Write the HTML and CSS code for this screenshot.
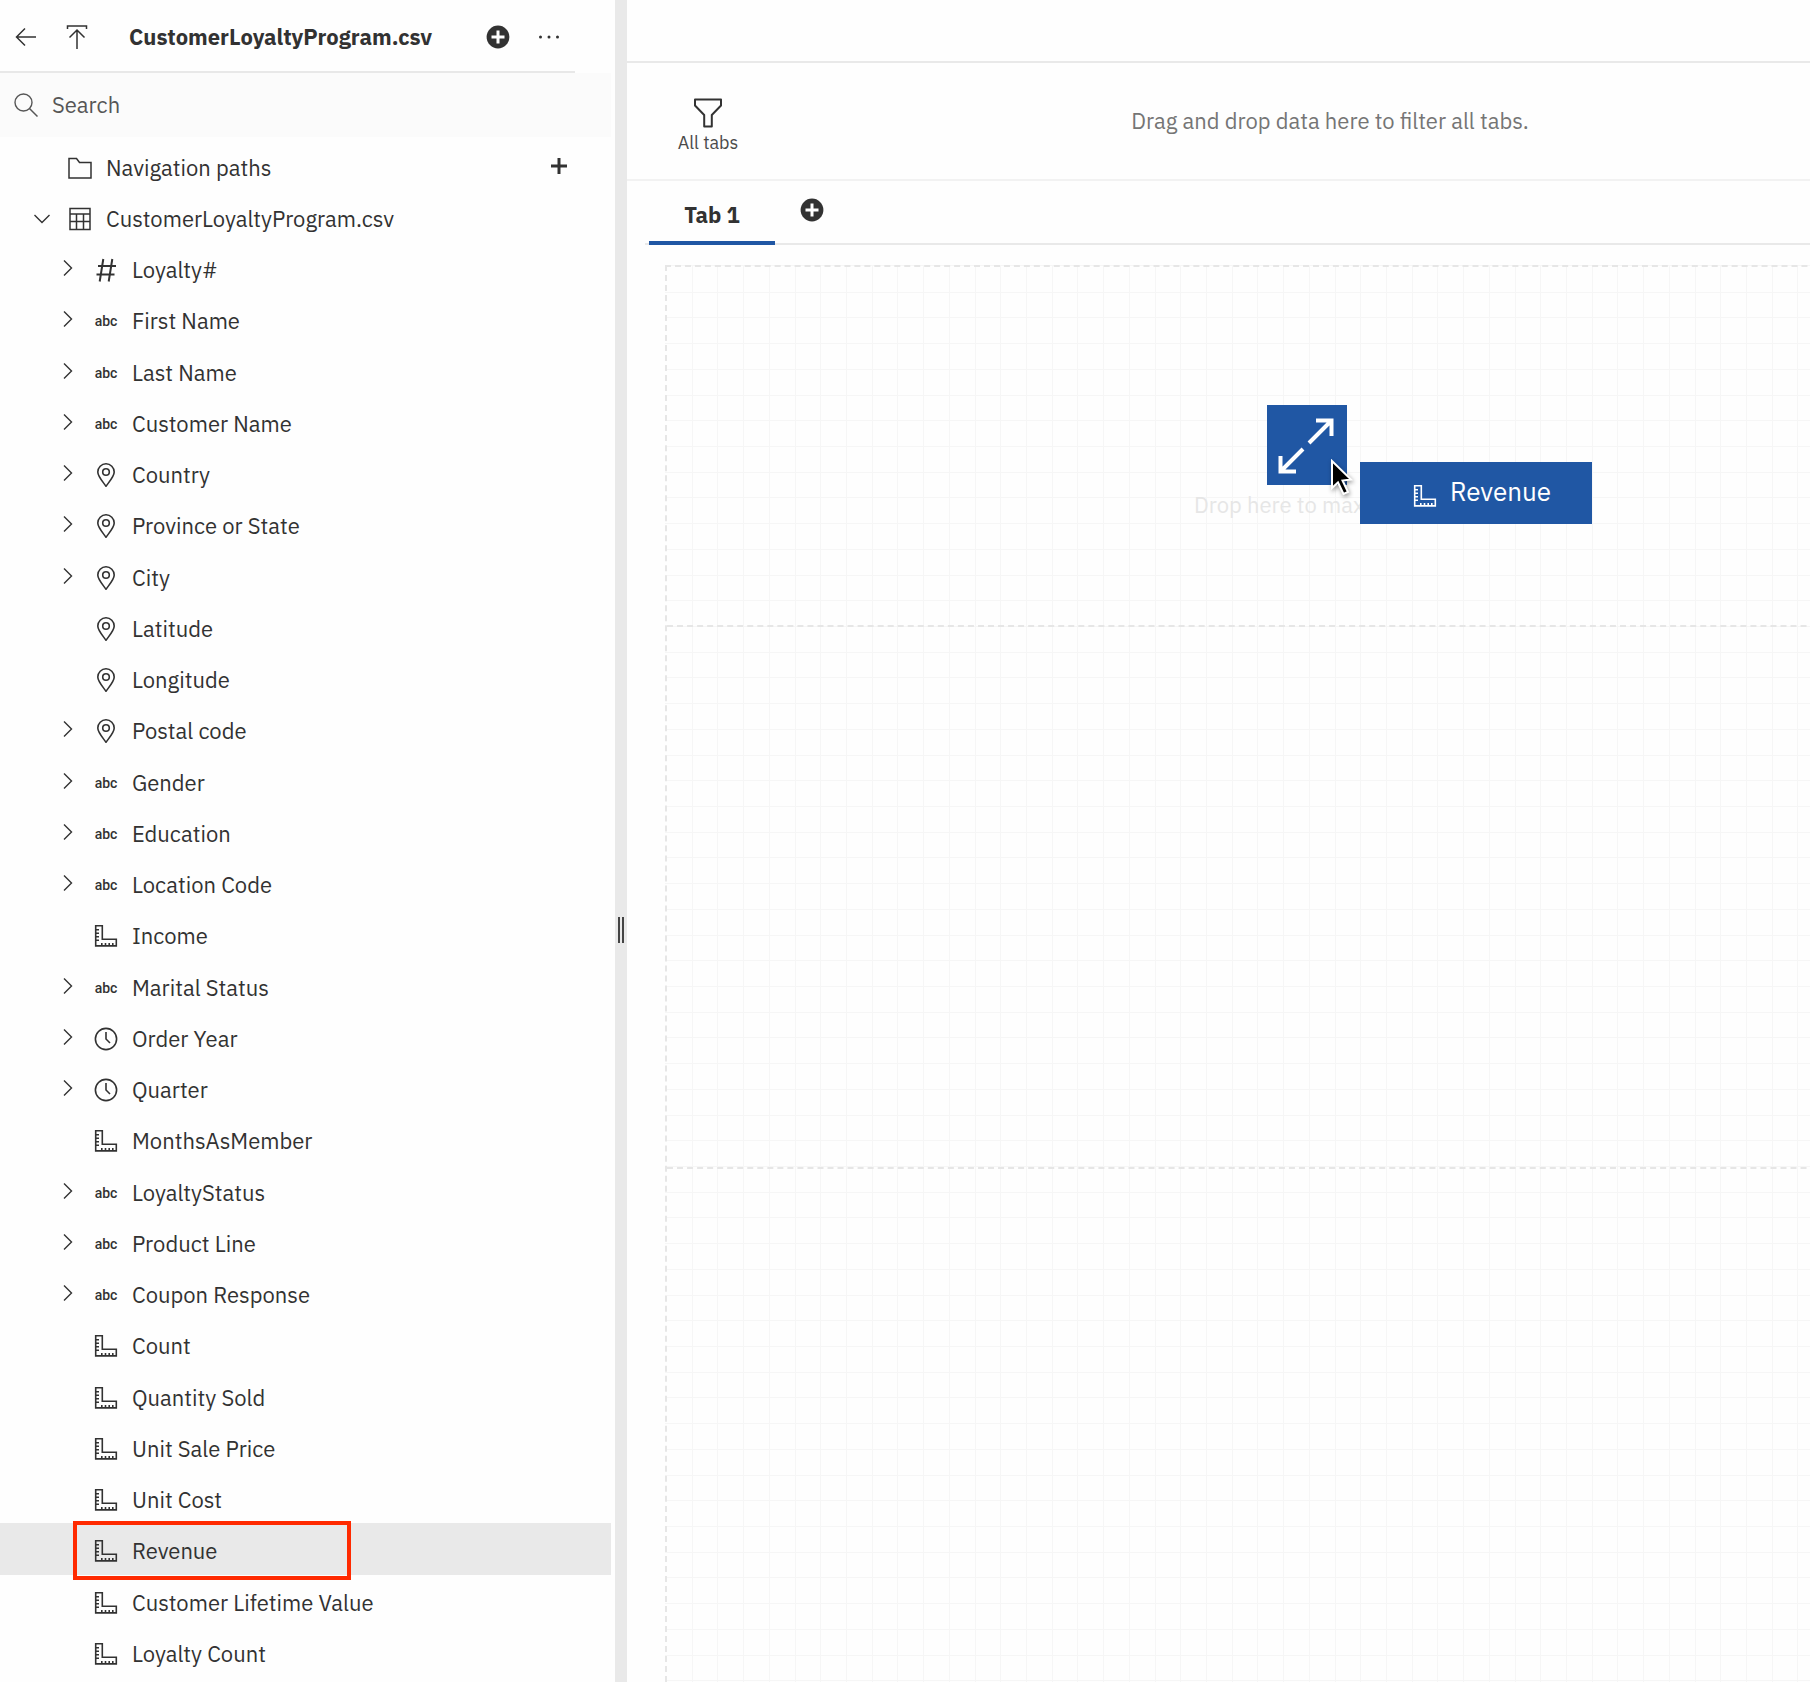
FILE: index.html
```html
<!DOCTYPE html>
<html lang="en">
<head>
<meta charset="utf-8">
<title>CustomerLoyaltyProgram.csv</title>
<link rel="stylesheet" href="styles.css">
</head>
<body>
<svg class="defs" aria-hidden="true">
  <symbol id="chevron" viewBox="0 0 10 18"><path d="M1 1.500l7.500 7.500-7.500 7.500" fill="none" stroke="currentColor" stroke-width="1.400"/></symbol>
  <symbol id="hash" viewBox="0 0 24 24"><path d="M9.300 1L5.700 23.500M18.300 1l-3.600 22.500M4 8h18M2.500 16.500h18" fill="none" stroke="currentColor" stroke-width="2"/></symbol>
  <symbol id="pin" viewBox="0 0 24 24"><path d="M12 23.200C9 19 3.800 13.500 3.800 9a8.200 8.200 0 0 1 16.400 0c0 4.500-5.200 10-8.200 14.200z" fill="none" stroke="currentColor" stroke-width="1.600"/><circle cx="12" cy="9" r="3.300" fill="none" stroke="currentColor" stroke-width="1.600"/></symbol>
  <symbol id="clock" viewBox="0 0 24 24"><circle cx="12" cy="12" r="10.600" fill="none" stroke="currentColor" stroke-width="1.600"/><path d="M12 5v7l4 4" fill="none" stroke="currentColor" stroke-width="1.600"/></symbol>
  <symbol id="ruler" viewBox="0 0 24 24"><path d="M1.700 1.700h6.600v13.600h14v6.600H1.700zM2 5.800h3M2 9.300h3M2 12.800h3M2 16.300h3M7.800 22v-3M11.500 22v-3M15.200 22v-3M18.800 22v-3" fill="none" stroke="currentColor" stroke-width="1.600"/></symbol>
  <symbol id="plus-circle" viewBox="0 0 24 24"><circle cx="12" cy="12" r="11.400" fill="currentColor"/><path d="M12 5.500v13M5.500 12h13" stroke="#fff" stroke-width="3"/></symbol>
</svg>
<div class="app">
  <aside class="sources">
    <header class="source-header">
      <button class="icon-button" aria-label="Back"><svg width="24" height="24" viewBox="0 0 24 24"><path d="M22 12H2.500M11 3.500L2.500 12l8.500 8.500" fill="none" stroke="currentColor" stroke-width="1.500"/></svg></button>
      <button class="icon-button" aria-label="Move to top"><svg width="24" height="24" viewBox="0 0 24 24"><path d="M2.500 4V1h19v3M12 24V5M4.500 12.500L12 5l7.500 7.500" fill="none" stroke="currentColor" stroke-width="1.500"/></svg></button>
      <h1 class="source-title">CustomerLoyaltyProgram.csv</h1>
      <button class="icon-button" aria-label="Add source"><svg width="24" height="24"><use href="#plus-circle"/></svg></button>
      <button class="icon-button" aria-label="More"><svg width="24" height="24" viewBox="0 0 24 24" fill="currentColor"><circle cx="3.500" cy="12" r="1.500"/><circle cx="12" cy="12" r="1.500"/><circle cx="20.500" cy="12" r="1.500"/></svg></button>
    </header>
    <label class="search">
      <svg width="24" height="24" viewBox="0 0 24 24"><circle cx="9.500" cy="9.500" r="8.500" fill="none" stroke="currentColor" stroke-width="1.400"/><path d="M15.500 15.500l8 8" stroke="currentColor" stroke-width="1.500"/></svg>
      <input type="search" placeholder="Search" aria-label="Search">
    </label>
    <div class="row group">
      <span class="chevron"></span>
      <svg class="type" viewBox="0 0 24 24"><path d="M1 2.500h7.500l3 4H23v15.500H1z" fill="none" stroke="currentColor" stroke-width="1.500"/></svg>
      <span class="name">Navigation paths</span>
      <button class="icon-button add-path" aria-label="Add navigation path"><svg width="16" height="16" viewBox="0 0 16 16"><path d="M8 0v16M0 8h16" stroke="currentColor" stroke-width="3"/></svg></button>
    </div>
    <div class="row group">
      <svg class="chevron open" viewBox="0 0 18 10"><path d="M1.500 1l7.500 7.500L16.500 1" fill="none" stroke="currentColor" stroke-width="1.400"/></svg>
      <svg class="type" viewBox="0 0 24 24"><path d="M2 1.500h20v21H2zM2 7h20M2 14.500h20M8.500 7v15.500M15.500 7v15.500" fill="none" stroke="currentColor" stroke-width="1.500"/></svg>
      <span class="name">CustomerLoyaltyProgram.csv</span>
    </div>
    <ul class="fields">
      <li class="row"><svg class="chevron"><use href="#chevron"/></svg><svg class="type"><use href="#hash"/></svg><span class="name">Loyalty#</span></li>
      <li class="row"><svg class="chevron"><use href="#chevron"/></svg><span class="type abc">abc</span><span class="name">First Name</span></li>
      <li class="row"><svg class="chevron"><use href="#chevron"/></svg><span class="type abc">abc</span><span class="name">Last Name</span></li>
      <li class="row"><svg class="chevron"><use href="#chevron"/></svg><span class="type abc">abc</span><span class="name">Customer Name</span></li>
      <li class="row"><svg class="chevron"><use href="#chevron"/></svg><svg class="type"><use href="#pin"/></svg><span class="name">Country</span></li>
      <li class="row"><svg class="chevron"><use href="#chevron"/></svg><svg class="type"><use href="#pin"/></svg><span class="name">Province or State</span></li>
      <li class="row"><svg class="chevron"><use href="#chevron"/></svg><svg class="type"><use href="#pin"/></svg><span class="name">City</span></li>
      <li class="row"><span class="chevron"></span><svg class="type"><use href="#pin"/></svg><span class="name">Latitude</span></li>
      <li class="row"><span class="chevron"></span><svg class="type"><use href="#pin"/></svg><span class="name">Longitude</span></li>
      <li class="row"><svg class="chevron"><use href="#chevron"/></svg><svg class="type"><use href="#pin"/></svg><span class="name">Postal code</span></li>
      <li class="row"><svg class="chevron"><use href="#chevron"/></svg><span class="type abc">abc</span><span class="name">Gender</span></li>
      <li class="row"><svg class="chevron"><use href="#chevron"/></svg><span class="type abc">abc</span><span class="name">Education</span></li>
      <li class="row"><svg class="chevron"><use href="#chevron"/></svg><span class="type abc">abc</span><span class="name">Location Code</span></li>
      <li class="row"><span class="chevron"></span><svg class="type"><use href="#ruler"/></svg><span class="name">Income</span></li>
      <li class="row"><svg class="chevron"><use href="#chevron"/></svg><span class="type abc">abc</span><span class="name">Marital Status</span></li>
      <li class="row"><svg class="chevron"><use href="#chevron"/></svg><svg class="type"><use href="#clock"/></svg><span class="name">Order Year</span></li>
      <li class="row"><svg class="chevron"><use href="#chevron"/></svg><svg class="type"><use href="#clock"/></svg><span class="name">Quarter</span></li>
      <li class="row"><span class="chevron"></span><svg class="type"><use href="#ruler"/></svg><span class="name">MonthsAsMember</span></li>
      <li class="row"><svg class="chevron"><use href="#chevron"/></svg><span class="type abc">abc</span><span class="name">LoyaltyStatus</span></li>
      <li class="row"><svg class="chevron"><use href="#chevron"/></svg><span class="type abc">abc</span><span class="name">Product Line</span></li>
      <li class="row"><svg class="chevron"><use href="#chevron"/></svg><span class="type abc">abc</span><span class="name">Coupon Response</span></li>
      <li class="row"><span class="chevron"></span><svg class="type"><use href="#ruler"/></svg><span class="name">Count</span></li>
      <li class="row"><span class="chevron"></span><svg class="type"><use href="#ruler"/></svg><span class="name">Quantity Sold</span></li>
      <li class="row"><span class="chevron"></span><svg class="type"><use href="#ruler"/></svg><span class="name">Unit Sale Price</span></li>
      <li class="row"><span class="chevron"></span><svg class="type"><use href="#ruler"/></svg><span class="name">Unit Cost</span></li>
      <li class="row selected"><span class="chevron"></span><svg class="type"><use href="#ruler"/></svg><span class="name">Revenue</span><span class="highlight"></span></li>
      <li class="row"><span class="chevron"></span><svg class="type"><use href="#ruler"/></svg><span class="name">Customer Lifetime Value</span></li>
      <li class="row"><span class="chevron"></span><svg class="type"><use href="#ruler"/></svg><span class="name">Loyalty Count</span></li>
    </ul>
  </aside>
  <div class="splitter" role="separator"><span class="grip"></span></div>
  <main class="dashboard">
    <div class="toolbar"></div>
    <section class="filter-bar">
      <div class="filter-scope">
        <svg width="32" height="32" viewBox="0 0 32 32"><path d="M3 2.500h26v6L19.800 18v11.500h-7.600V18L3 8.500z" fill="none" stroke="currentColor" stroke-width="2" stroke-linejoin="round"/></svg>
        <span>All tabs</span>
      </div>
      <p class="filter-hint">Drag and drop data here to filter all tabs.</p>
    </section>
    <nav class="tabs">
      <button class="tab">Tab 1</button>
      <button class="icon-button add-tab" aria-label="Add tab"><svg width="24" height="24"><use href="#plus-circle"/></svg></button>
    </nav>
    <div class="canvas">
      <section class="zone zone-top">
        <div class="maximize">
          <svg width="80" height="80" viewBox="0 0 80 80"><path d="M42 38L64 16M49 15.500h15.500V31M36 44L14 66M13.500 51v15.500H29" fill="none" stroke="#fff" stroke-width="4"/></svg>
          <span class="maximize-label">Drop here to maximize</span>
        </div>
      </section>
      <section class="zone zone-middle"></section>
      <section class="zone zone-bottom"></section>
      <div class="drag-chip"><svg width="24" height="24"><use href="#ruler"/></svg><span>Revenue</span></div>
      <svg class="cursor" width="24" height="40" viewBox="0 0 24 40"><path d="M2 2v27l6-5.500 5.500 11.500 4.500-2-5.500-11.500 8.500-1z" fill="#000" stroke="#fff" stroke-width="2"/></svg>
    </div>
  </main>
</div>
</body>
</html>
```
FILE: styles.css
```css
* {
  box-sizing: border-box;
}

body {
  margin: 0;
  background: #fefefe;
  color: #323232;
  font: 22px/28px "IBM Plex Sans", Roboto, sans-serif;
}

.defs {
  position: absolute;
  width: 0;
  height: 0;
}

button,
input {
  padding: 0;
  border: 0;
  background: none;
  color: inherit;
  font: inherit;
}

svg {
  flex: none;
}

.app {
  display: flex;
  min-height: 100vh;
  overflow: hidden;
}

.sources {
  flex: 0 0 34%;
  max-width: 615px;
  padding-right: 4px;
}

.source-header {
  display: flex;
  align-items: center;
  height: 73px;
  margin-right: 36px;
  padding: 2px 14px 0;
  gap: 27px;
  border-bottom: 2px solid #e8e8e8;
}

.icon-button {
  display: flex;
}

.source-title {
  flex: 1;
  margin: 0;
  padding-left: 13px;
  font-size: 22px;
  font-weight: 700;
}

.search {
  display: flex;
  align-items: center;
  height: 64px;
  margin-bottom: 3px;
  padding: 0 14px;
  gap: 14px;
  background: #fbfbfb;
  color: #565656;
}

.search input {
  flex: 1;
  outline: 0;
}

.search input::placeholder {
  color: #565656;
  opacity: 1;
}

.row {
  display: flex;
  align-items: center;
  height: 51px;
  padding-left: 63px;
}

.fields .row:nth-child(4n + 2) {
  height: 52px;
}

.group {
  padding: 5px 44px 0 33px;
}

.fields {
  margin: 0;
  padding: 0;
  list-style: none;
}

.chevron {
  flex: none;
  width: 10px;
  height: 18px;
  margin-right: 21px;
}

.group .chevron {
  width: 18px;
  margin-right: 17px;
}

.type {
  flex: none;
  width: 24px;
  height: 24px;
  margin-right: 14px;
}

.abc {
  font: 500 14px/24px Roboto, sans-serif;
  text-align: center;
}

.fields .type,
.fields .name {
  margin-top: 4px;
}

.name {
  flex: 1;
}

.add-path {
  margin-bottom: 4px;
}

.selected {
  position: relative;
  background: #e9e9e9;
}

.highlight {
  position: absolute;
  top: -2px;
  bottom: -5px;
  left: 73px;
  width: 278px;
  border: 4px solid #ff2a00;
}

.splitter {
  display: flex;
  flex: none;
  width: 12px;
  padding-top: 917px;
  justify-content: center;
  background: #e9e9e9;
}

.grip {
  width: 6px;
  height: 26px;
  border: solid #444;
  border-width: 0 2px;
}

.dashboard {
  display: flex;
  flex: 1;
  flex-direction: column;
  min-width: 0;
}

.toolbar {
  height: 63px;
  border-bottom: 2px solid #e9e9e9;
}

.filter-bar {
  display: flex;
  align-items: center;
  height: 118px;
  padding-left: 50px;
  border-bottom: 2px solid #f2f2f2;
}

.filter-scope {
  display: flex;
  flex-direction: column;
  align-items: center;
  width: 62px;
  margin-right: 111px;
  padding-top: 11px;
  font-size: 18px;
  color: #4a4a4a;
  white-space: nowrap;
}

.filter-scope svg {
  color: #323232;
}

.filter-hint {
  flex: 1;
  margin: 0;
  color: #757575;
  text-align: center;
}

.tabs {
  display: flex;
  height: 64px;
  margin-left: 18px;
  padding-left: 4px;
  border-bottom: 2px solid #e9e9e9;
}

.tab {
  width: 126px;
  height: 64px;
  padding-top: 8px;
  border-bottom: 4px solid #2057a4;
  font-weight: 700;
}

.add-tab {
  margin: 17px 25px;
}

.canvas {
  position: relative;
  display: flex;
  flex: 1;
  flex-direction: column;
  margin: 20px -137px 0 38px;
  border: 2px dashed #e6e6e6;
  border-width: 2px 0 0 2px;
  background:
    repeating-linear-gradient(90deg, transparent 0 calc(180px / 7 - 1px), #f6f6f6 calc(180px / 7 - 1px) calc(180px / 7)),
    repeating-linear-gradient(180deg, transparent 0 calc(180px / 7 - 1px), #f6f6f6 calc(180px / 7 - 1px) calc(180px / 7));
}

.zone-top {
  display: flex;
  align-items: center;
  justify-content: center;
  height: 360px;
  padding-bottom: 2px;
  border-bottom: 2px dashed #e6e6e6;
}

.zone-middle {
  height: 542px;
  border-bottom: 2px dashed #e6e6e6;
}

.zone-bottom {
  flex: 1;
}

.maximize {
  position: relative;
  width: 80px;
  height: 80px;
  background: #2057a4;
}

.maximize-label {
  position: absolute;
  top: 86px;
  left: -73px;
  color: #e6e6e6;
  white-space: nowrap;
}

.drag-chip {
  position: absolute;
  top: 195px;
  left: 693px;
  display: flex;
  width: 232px;
  height: 62px;
  padding: 0 0 4px 12px;
  align-items: center;
  justify-content: center;
  gap: 13px;
  background: #2057a4;
  color: #fff;
  font-size: 26px;
}

.drag-chip svg {
  margin-top: 10px;
}

.cursor {
  position: absolute;
  top: 192px;
  left: 663px;
  filter: drop-shadow(1px 2px 2px #00000066);
}
```
